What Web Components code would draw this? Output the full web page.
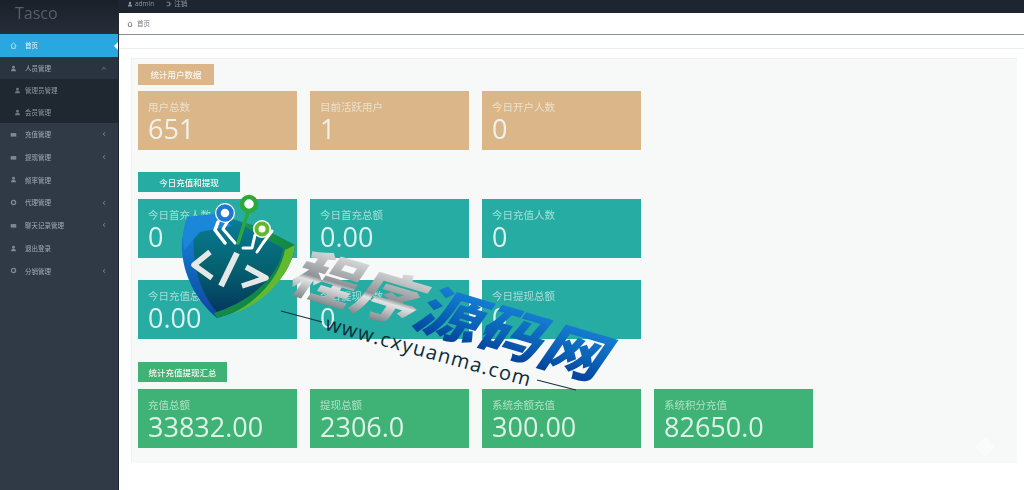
<!DOCTYPE html>
<html lang="zh">
<head>
<meta charset="utf-8">
<title>Tasco</title>
<style>
html,body{margin:0;padding:0;width:1024px;height:490px;overflow:hidden;background:#fff;font-family:"Open Sans","Noto Sans CJK SC",sans-serif}
</style>
</head>
<body>
<app-shell>
  <side-menu slot="side">
    <menu-item active icon="home">首页</menu-item>
    <menu-item icon="user" chevron="up" open>人员管理</menu-item>
    <menu-item sub icon="user">管理员管理</menu-item>
    <menu-item sub icon="user">会员管理</menu-item>
    <menu-item icon="card" chevron="left">充值管理</menu-item>
    <menu-item icon="card" chevron="left">提现管理</menu-item>
    <menu-item icon="user">频率管理</menu-item>
    <menu-item icon="gear" chevron="left">代理管理</menu-item>
    <menu-item icon="card" chevron="left">聊天记录管理</menu-item>
    <menu-item icon="user">退出登录</menu-item>
    <menu-item icon="gear" chevron="left">分销管理</menu-item>
  </side-menu>
  <top-bar slot="top"></top-bar>
  <crumb-bar slot="top">首页</crumb-bar>
  <stat-section heading="统计用户数据" color="#dab688" hw="76" hh="21" hgap="6">
    <stat-card label="用户总数" value="651"></stat-card>
    <stat-card label="目前活跃用户" value="1"></stat-card>
    <stat-card label="今日开户人数" value="0"></stat-card>
  </stat-section>
  <stat-section heading="今日充值和提现" color="#26aca2" hw="102" hh="20" hgap="7" top="22" cols="3">
    <stat-card label="今日首充人数" value="0"></stat-card>
    <stat-card label="今日首充总额" value="0.00"></stat-card>
    <stat-card label="今日充值人数" value="0"></stat-card>
    <stat-card label="今日充值总额" value="0.00"></stat-card>
    <stat-card label="今日提现人数" value="0"></stat-card>
    <stat-card label="今日提现总额" value="0"></stat-card>
  </stat-section>
  <stat-section heading="统计充值提现汇总" color="#3fb276" hw="89" hh="20" hgap="7" top="23">
    <stat-card label="充值总额" value="33832.00"></stat-card>
    <stat-card label="提现总额" value="2306.0"></stat-card>
    <stat-card label="系统余额充值" value="300.00"></stat-card>
    <stat-card label="系统积分充值" value="82650.0"></stat-card>
  </stat-section>
</app-shell>
<water-mark></water-mark>

<script>
const ICONS={
 home:'<path d="M1 5 5 1.500 9 5M2.500 4.500V9h5V4.500" fill="none" stroke="currentColor" stroke-width="1.400"/>',
 user:'<circle cx="5" cy="3.200" r="2" fill="currentColor"/><path d="M1.500 9c0-2.600 1.600-3.600 3.500-3.600S8.500 6.400 8.500 9z" fill="currentColor"/>',
 card:'<path d="M1 3h8v5H1z" fill="currentColor"/>',
 gear:'<circle cx="5" cy="5" r="3" fill="none" stroke="currentColor" stroke-width="1.800"/>'
};
class AppShell extends HTMLElement{
 constructor(){super();this.attachShadow({mode:'open'}).innerHTML=`<style>
 :host{display:grid;grid-template-columns:119px 1fr;width:1024px;height:490px;filter:blur(.6px)}
 .main{display:flex;flex-direction:column;min-width:0;background:#fff}
 .gap{height:13px;border-bottom:1px solid #eceeee;flex:none}
 .panel{margin:9px 7px 0 12px;height:405px;box-sizing:border-box;padding:5px 0 0 6px;background:#f7f8f8;border-left:1px solid #f0f1f1;border-top:1px solid #eef0f0;flex:none;position:relative}
 .panel::after{content:"";position:absolute;left:846px;top:381px;width:14px;height:14px;background:#fff;opacity:.45;transform:rotate(45deg)}
 </style><slot name="side"></slot><div class="main"><slot name="top"></slot><div class="gap"></div><div class="panel"><slot></slot></div></div>`}
}
class SideMenu extends HTMLElement{
 constructor(){super();this.attachShadow({mode:'open'}).innerHTML=`<style>
 :host{display:block;height:490px;background:#2f3a46;color:#aab3bc;border-right:1px solid #20272f;box-sizing:border-box}
 .logo{height:34px;box-sizing:border-box;padding:3px 0 0 15px;background:linear-gradient(#1a2029,#262e39);font:16px/20px "Open Sans",sans-serif;color:#565f69}
 </style><div class="logo">Tasco</div><slot></slot>`}
}
class MenuItem extends HTMLElement{
 constructor(){super();
  const icon=ICONS[this.getAttribute('icon')]||'';
  const ch=this.getAttribute('chevron');
  const chev=ch==='up'?'<path d="M2 7l3-3 3 3" fill="none" stroke="currentColor" stroke-width="1.500"/>':ch==='left'?'<path d="M7 2 3.500 5 7 8" fill="none" stroke="currentColor" stroke-width="1.500"/>':'';
  this.attachShadow({mode:'open'}).innerHTML=`<style>
 :host{display:flex;align-items:center;height:22.75px;padding-left:10px;font:6.500px/1 "Noto Sans CJK SC",sans-serif;color:#a3abb4;position:relative;box-sizing:border-box}
 :host([active]){background:#29a8e0;color:#eaf6fc;height:23px}
 :host([open]){background:#2a3440;height:22px}
 :host([sub]){background:#1f2731;padding-left:14px;color:#8f98a1;height:22px}
 svg{width:7px;height:7px;flex:none;opacity:.7}
 .t{margin-left:8px;white-space:nowrap}
 :host([sub]) .t{margin-left:4px}
 .c{position:absolute;right:11px;top:50%;margin-top:-3px;width:6px;height:6px}
 .notch{display:none;position:absolute;right:0;top:50%;margin-top:-4px;border:4px solid transparent;border-right-color:#fff;border-left:0}
 :host([active]) .notch{display:block}
 </style><svg viewBox="0 0 10 10">${icon}</svg><span class="t"><slot></slot></span>${chev?`<svg class="c" viewBox="0 0 10 10">${chev}</svg>`:''}<i class="notch"></i>`}
}
class TopBar extends HTMLElement{
 constructor(){super();this.attachShadow({mode:'open'}).innerHTML=`<style>
 :host{display:flex;align-items:flex-start;height:13px;background:#1d2530;color:#8d96a0;font:6.500px/7px "Open Sans","Noto Sans CJK SC",sans-serif;padding:0 0 0 8px;overflow:hidden;gap:12px;flex:none}
 span{display:flex;align-items:center;gap:2px}
 svg{width:6px;height:6px;flex:none}
 </style><span><svg viewBox="0 0 10 10">${ICONS.user}</svg>admin</span><span><svg viewBox="0 0 10 10"><path d="M1 2h5v6H1M5 5h4" fill="none" stroke="currentColor" stroke-width="1.300"/></svg>注销</span>`}
}
class CrumbBar extends HTMLElement{
 constructor(){super();this.attachShadow({mode:'open'}).innerHTML=`<style>
 :host{display:flex;align-items:center;gap:4px;height:22px;box-sizing:border-box;background:#fff;border-bottom:1px solid #8a8f94;color:#737a81;padding-left:8px;font:6.500px/1 "Noto Sans CJK SC",sans-serif;flex:none}
 svg{width:6px;height:6px}
 </style><svg viewBox="0 0 10 10">${ICONS.home}</svg><slot></slot>`}
}
class StatSection extends HTMLElement{
 constructor(){super();
  const g=n=>this.getAttribute(n);
  this.attachShadow({mode:'open'}).innerHTML=`<style>
 :host{display:block;margin-top:${g('top')||0}px;--card:${g('color')}}
 .h{width:${g('hw')}px;height:${g('hh')}px;margin-bottom:${g('hgap')}px;background:var(--card);color:#f8f6ef;font:500 8.500px/${g('hh')}px "Noto Sans CJK SC",sans-serif;text-align:center;white-space:nowrap}
 .g{display:grid;grid-template-columns:repeat(${g('cols')||4},159px);column-gap:13px;row-gap:22px}
 </style><div class="h">${g('heading')}</div><div class="g"><slot></slot></div>`}
}
class StatCard extends HTMLElement{
 constructor(){super();
  const g=n=>this.getAttribute(n);
  this.attachShadow({mode:'open'}).innerHTML=`<style>
 :host{display:block;height:59px;box-sizing:border-box;padding:8px 0 0 10px;background:var(--card);color:#f4fbf8;overflow:hidden}
 .l{font:10.500px/15px "Noto Sans CJK SC",sans-serif;opacity:.62;white-space:nowrap}
 .v{font:400 27px/30px "Open Sans",sans-serif;opacity:.88;margin-top:0}
 </style><div class="l">${g('label')}</div><div class="v">${g('value')}</div>`}
}
class WaterMark extends HTMLElement{
 constructor(){super();this.attachShadow({mode:'open'}).innerHTML=`<style>
 :host{display:block;position:absolute;left:0;top:0;width:1024px;height:490px;overflow:hidden;pointer-events:none}
 svg{position:absolute;left:170px;top:180px;width:440px;height:230px}
 .name{position:absolute;left:300px;top:232px;transform-origin:0 50%;transform:rotate(16.5deg) skewX(-18deg) scaleY(.88);font:900 64px/70px "Noto Sans CJK SC",sans-serif;letter-spacing:1px;white-space:nowrap;display:flex}
 .name span{-webkit-background-clip:text;background-clip:text;color:transparent}
 .a{background-image:linear-gradient(#ececec,#8f9397 58%,#e2e3e4 66%,#7d8185)}
 .b{background-image:linear-gradient(#1a86dc,#0a62b6 60%,#04429a)}
 .url{position:absolute;left:326px;top:311px;transform-origin:0 50%;transform:rotate(15.5deg);font:400 20px/24px "Open Sans",sans-serif;letter-spacing:1.300px;color:#0c2c3a;white-space:nowrap}
 </style>
 <svg viewBox="170 180 440 230">
  <defs>
   <linearGradient id="s" x1="0" y1="0" x2="0" y2="1"><stop offset="0" stop-color="#0a7f9a"/><stop offset=".55" stop-color="#05616f"/><stop offset="1" stop-color="#04375e"/></linearGradient>
   <linearGradient id="e" x1="0" y1="0" x2="0" y2="1"><stop offset="0" stop-color="#1b8ae0"/><stop offset="1" stop-color="#0a46a0"/></linearGradient>
   <linearGradient id="r" x1="0" y1="0" x2="1" y2="1"><stop offset="0" stop-color="#1f9e45"/><stop offset="1" stop-color="#0b7a45"/></linearGradient>
  </defs>
  <path d="M187 217 215 214 262 228 295 245C292 275 262 305 217 318 195 300 180 270 182 240Z" fill="url(#e)"/>
  <path d="M194 232 215 214 262 228 286 244C284 272 258 298 217 312 202 295 191 268 194 232Z" fill="url(#s)"/>
  <path d="M240 222 262 228 295 245C292 275 262 305 217 318L214 313C255 300 281 272 283 248 268 240 252 232 240 222Z" fill="url(#r)"/>
  <path d="M295 245C292 275 262 305 232 314 262 298 280 275 285 250Z" fill="#62b92f"/>
  <path d="M187 217 215 214 232 226 200 232 184 250C182 235 184 226 187 217Z" fill="#1c86d8"/>
  <g fill="none" stroke-linecap="round" stroke-linejoin="round">
   <path d="M218 222 215 230 225 243" stroke="#fff" stroke-width="3.500"/>
   <path d="M228 221 223 229 235 243" stroke="#fff" stroke-width="3"/>
   <path d="M248 212 238 243" stroke="#2da83c" stroke-width="3.500"/>
   <path d="M255 235 252 248 243 248" stroke="#fff" stroke-width="3"/>
   <path d="M272 231 263 243 257 252" stroke="#fff" stroke-width="3"/>
   <path d="M210 252 194 265 212 278" stroke="#e6e8e8" stroke-width="5.500" stroke-linecap="butt"/>
   <path d="M237 253 221 286" stroke="#e6e8e8" stroke-width="6" stroke-linecap="butt"/>
   <path d="M246 267 266 278 242 286" stroke="#e6e8e8" stroke-width="5.500" stroke-linecap="butt"/>
  </g>
  <circle cx="225" cy="213" r="10" fill="#fff"/>
  <circle cx="225" cy="213" r="6.500" fill="#fff" stroke="#1f77cf" stroke-width="4.500"/>
  <circle cx="249" cy="204" r="7" fill="#fff" stroke="#2da83c" stroke-width="4.500"/>
  <circle cx="262" cy="229" r="9" fill="#fff"/>
  <circle cx="262" cy="229" r="5.500" fill="#fff" stroke="#62b92f" stroke-width="4"/>
  <path d="M281 311 322 322M537 380 576 390" stroke="#17323e" stroke-width="1.200" fill="none"/>
 </svg>
 <div class="name"><span class="a">程序</span><span class="b">源码网</span></div>
 <div class="url">www.cxyuanma.com</div>`}
}
customElements.define('app-shell',AppShell);
customElements.define('side-menu',SideMenu);
customElements.define('menu-item',MenuItem);
customElements.define('top-bar',TopBar);
customElements.define('crumb-bar',CrumbBar);
customElements.define('stat-section',StatSection);
customElements.define('stat-card',StatCard);
customElements.define('water-mark',WaterMark);
</script>
</body>
</html>
